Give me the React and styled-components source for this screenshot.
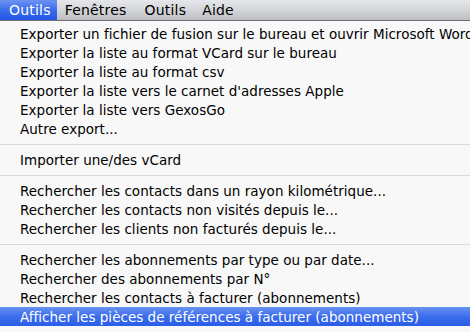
import React from 'react';
import styled, { createGlobalStyle } from 'styled-components';

const Global = createGlobalStyle`
  html, body {
    margin: 0;
    padding: 0;
    background: #ffffff;
  }
  body {
    font-family: "DejaVu Sans", "Liberation Sans", sans-serif;
  }
`;

const Screen = styled.div`
  width: 470px;
  height: 332px;
  overflow: hidden;
  display: flex;
  flex-direction: column;
  background: #f7f7f7;
`;

const MenuBar = styled.div`
  height: 20px;
  flex: none;
  display: flex;
  align-items: stretch;
  background: linear-gradient(#e6e7ea, #d2d3d6 55%, #bdbec2);
  border-bottom: 1px solid #6f6f6f;
`;

const BarItem = styled.div`
  display: flex;
  align-items: center;
  padding: 0 ${p => p.$right}px 0 ${p => p.$left}px;
  font-size: 14px;
  letter-spacing: 0.2px;
  color: ${p => (p.$active ? '#ffffff' : '#000000')};
  background: ${p =>
    p.$active ? 'linear-gradient(#6d93f3, #3b6cec 50%, #2457e7)' : 'transparent'};
`;

const Menu = styled.div`
  flex: 1;
  display: flex;
  flex-direction: column;
  padding-top: 3px;
  background: #f8f8f8;
`;

const Item = styled.div`
  height: 19px;
  flex: none;
  display: flex;
  align-items: center;
  padding-left: 20px;
  font-size: 13.5px;
  letter-spacing: 0.02px;
  white-space: nowrap;
  color: ${p => (p.$selected ? '#ffffff' : '#000000')};
  background: ${p =>
    p.$selected ? 'linear-gradient(#6892f2, #3c6deb 50%, #2a5de8)' : 'transparent'};
`;

const Separator = styled.div`
  height: 12px;
  flex: none;
  display: flex;
  align-items: center;
  &::after {
    content: '';
    flex: 1;
    height: 1px;
    background: #d9d9d9;
  }
`;

const groups = [
  [
    'Exporter un fichier de fusion sur le bureau et ouvrir Microsoft Word',
    'Exporter la liste au format VCard sur le bureau',
    'Exporter la liste au format csv',
    "Exporter la liste vers le carnet d'adresses Apple",
    'Exporter la liste vers GexosGo',
    'Autre export...',
  ],
  ['Importer une/des vCard'],
  [
    'Rechercher les contacts dans un rayon kilométrique...',
    'Rechercher les contacts non visités depuis le...',
    'Rechercher les clients non facturés depuis le...',
  ],
  [
    'Rechercher les abonnements par type ou par date...',
    'Rechercher des abonnements par N°',
    'Rechercher les contacts à facturer (abonnements)',
    'Afficher les pièces de références à facturer (abonnements)',
  ],
];

const selected = 'Afficher les pièces de références à facturer (abonnements)';

export default function App() {
  return (
    <Screen>
      <Global />
      <MenuBar>
        <BarItem $active $left={9} $right={6}>Outils</BarItem>
        <BarItem $left={8} $right={9}>Fenêtres</BarItem>
        <BarItem $left={9} $right={7}>Outils</BarItem>
        <BarItem $left={9} $right={6}>Aide</BarItem>
      </MenuBar>
      <Menu>
        {groups.map((g, gi) => (
          <React.Fragment key={gi}>
            {gi > 0 && <Separator />}
            {g.map(label => (
              <Item key={label} $selected={label === selected}>
                {label}
              </Item>
            ))}
          </React.Fragment>
        ))}
      </Menu>
    </Screen>
  );
}
